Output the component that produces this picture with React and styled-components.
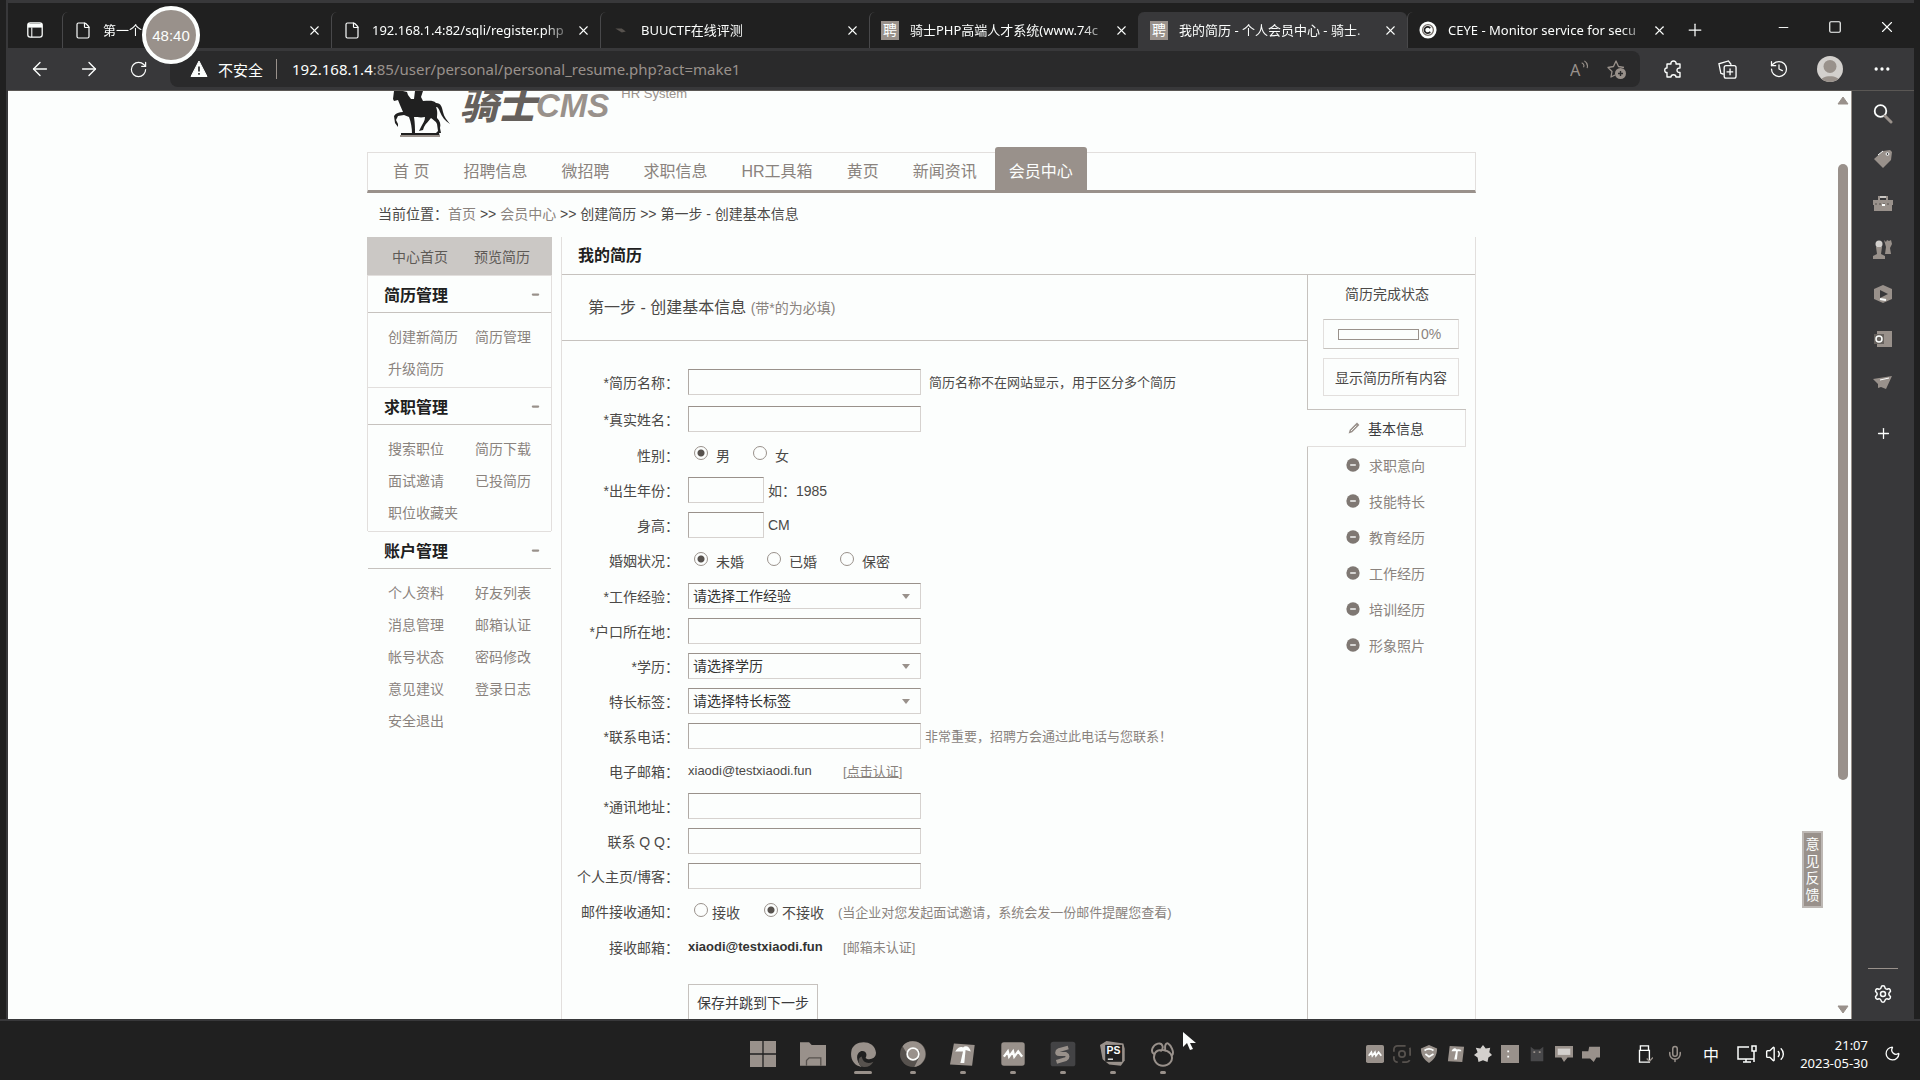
import React from "react";
import styled, { createGlobalStyle, css } from "styled-components";
import {
  ArrowLeft, ArrowRight, RotateCw, X, Plus, Minus, Square, File, History,
  Ellipsis, Settings, Mic, Volume2, Moon,
} from "lucide-react";

const c = {
  ink: "#202020",
  chrome: "#38383a",
  pill: "#2a2a2b",
  tone: "#99918b",
  soft: "#8a837e",
  text: "#4b4947",
  paper: "#fcfefd",
  line: "#c6c2be",
  faint: "#e2dfdd",
};
const uiFont = `"Noto Sans", "Noto Sans CJK SC", sans-serif`;
const pageFont = `"Liberation Sans", "Noto Sans CJK SC", sans-serif`;

const Global = createGlobalStyle`
  * { box-sizing: border-box; }
  body { margin: 0; background: ${c.ink}; overflow: hidden; }
  button, input, select { font: inherit; color: inherit; }
  button { background: none; border: 0; padding: 0; }
  a { color: inherit; text-decoration: none; }
`;

/* ---------- browser window ---------- */
const Desktop = styled.div`
  height: 100vh; display: flex; flex-direction: column;
  background: ${c.ink}; color: ${c.paper}; font-family: ${uiFont}; font-size: 14px;
`;
const Win = styled.div`
  flex: 1; min-height: 0; display: flex; flex-direction: column; position: relative;
  margin: 0 6px; border: solid ${c.chrome}; border-width: 3px 0 0 2px;
`;
const TabStrip = styled.div`
  height: 45px; display: flex; align-items: flex-end; background: ${c.ink};
`;
const TabMenu = styled.button`
  width: 54px; height: 36px; display: flex; align-items: center; padding-left: 19px;
`;
const Tab = styled.div`
  width: 269px; height: 36px; display: flex; align-items: center; gap: 11px;
  padding: 0 9px 0 11px; position: relative;
  border-radius: 6px 6px 0 0;
  border-left: 1px solid ${(p) => (p.$active ? c.chrome : "#48484a")};
  background: ${(p) => (p.$active ? c.chrome : "transparent")};
`;
const TabIcon = styled.span`
  width: 18px; height: 20px; flex: none; display: flex; align-items: center; justify-content: center;
`;
const TabTitle = styled.span`
  flex: 1; min-width: 0; white-space: nowrap; line-height: 24px; font-size: 13px;
  mask-image: linear-gradient(to right, #000 90%, #0005);
`;
const IconButton = styled.button`
  width: ${(p) => p.$w || 16}px; height: ${(p) => p.$h || 24}px; flex: none;
  display: flex; align-items: center; justify-content: center; color: ${(p) => p.$color || c.paper};
`;
const Pin = styled.span`
  width: 18px; height: 19px; background: ${c.tone}; color: ${c.paper}; font-size: 14px; line-height: 18px;
  text-align: center;
`;
const WinButtons = styled.div`
  margin-left: auto; display: flex; height: 41px; align-items: flex-start; padding-top: 8px;
`;
const Toolbar = styled.div`
  height: 43px; display: flex; align-items: center; background: ${c.chrome};
  border-bottom: 1px solid #5a5754; padding-left: 7px;
`;
const Address = styled.div`
  flex: 1; height: 36px; border-radius: 8px; background: ${c.pill}; display: flex; align-items: center;
  margin-left: 7px; padding: 0 12px 0 20px; gap: 10px; font-size: 15px;
`;
const Divider = styled.span`
  width: 1px; height: 20px; background: ${c.tone}; margin: 0 5px 0 3px;
`;
const Url = styled.span`
  flex: 1; color: ${c.tone}; white-space: nowrap;
  b { font-weight: 400; color: ${c.paper}; }
`;
const Tools = styled.div`
  display: flex; align-items: center; padding: 0 7px 0 8px;
`;
const Avatar = styled.span`
  width: 26px; height: 26px; border-radius: 50%; background: #d3d0cd; overflow: hidden; display: block;
`;
const Timer = styled.div`
  position: absolute; left: 134px; top: 3px; width: 58px; height: 58px; border-radius: 50%;
  border: 4px solid ${c.paper}; background: ${c.tone}; display: flex; align-items: center; justify-content: center;
  font-family: ${pageFont}; font-size: 15px;
`;
const Body = styled.div`
  flex: 1; min-height: 0; display: flex; background: ${c.chrome};
`;
const Viewport = styled.div`
  flex: 1; min-width: 0; display: flex; overflow: hidden; position: relative;
  background: ${c.paper}; color: ${c.text}; font-family: ${pageFont};
  border-right: 1px solid ${c.tone};
`;
const ScrollTrack = styled.div`
  width: 16px; flex: none; display: flex; flex-direction: column; align-items: center; padding: 5px 0;
`;
const Thumb = styled.div`
  width: 10px; height: 67.1%; margin-top: 59px; margin-bottom: auto; border-radius: 5px; background: ${c.tone};
`;
const EdgeBar = styled.aside`
  width: 62px; flex: none; display: flex; flex-direction: column; align-items: center; padding-bottom: 13px;
`;
const Rule = styled.span`
  width: 30px; height: 1px; background: ${c.tone}; margin: auto 0 13px;
`;
const Feedback = styled.button`
  position: absolute; right: 28px; top: 740px; width: 21px; height: 77px; padding: 3px 0;
  background: ${c.tone}; border: 2px solid #bdb8b4; color: ${c.paper}; font-size: 14px; line-height: 17px;
  display: flex; flex-direction: column; align-items: center;
`;

/* ---------- site ---------- */
const Site = styled.div`
  width: 1109px; max-width: 100%; min-height: 100%; margin: 0 auto; display: flex; flex-direction: column; font-size: 14px;
`;
const Logo = styled.div`
  height: 61px; flex: none; display: flex; align-items: flex-start; padding-left: 26px; overflow: hidden;
`;
const LogoName = styled.span`
  margin-left: 9px; height: 34px; display: flex; align-items: flex-end; color: #65605c;
  font-style: italic; font-weight: 900; line-height: 38px; font-size: 38px;
`;
const LogoLatin = styled.span`
  height: 31px; display: flex; align-items: flex-end; color: ${c.tone};
  font-style: italic; font-weight: 700; font-size: 33px; line-height: 33px; font-family: ${pageFont};
`;
const LogoTag = styled.span`
  margin-left: 12px; height: 10px; display: flex; align-items: flex-end; color: ${c.tone};
  font-size: 13px; line-height: 14px; white-space: nowrap;
`;
const Nav = styled.nav`
  height: 41px; flex: none; display: flex; padding-left: 8px;
  border: 1px solid ${c.faint}; border-bottom: 3px solid ${c.tone};
`;
const NavLink = styled.a`
  padding: 0 17px; font-size: 16px; line-height: 37px; color: ${c.soft}; white-space: nowrap;
  ${(p) => p.$active && css`
    margin: -6px 0 0 1px; padding: 6px 14px 0; background: ${c.tone}; color: ${c.paper};
    border-radius: 3px 3px 0 0;
  `}
`;
const Crumbs = styled.div`
  height: 44px; flex: none; padding-left: 11px; line-height: 43px; font-size: 14px; white-space: nowrap;
  a { color: ${c.soft}; }
`;
const Columns = styled.div`
  flex: 1; display: flex; gap: 9px;
`;
const Side = styled.div`
  width: 185px; flex: none;
`;
const SideHead = styled.div`
  height: 38px; background: #cbc8c5; display: flex; align-items: center; padding-left: 25px; gap: 26px; color: #5d5955;
`;
const Group = styled.section`
  border: solid ${c.faint}; border-width: 0 1px; padding-bottom: ${(p) => (p.$last ? 0 : 3)}px;
  ${(p) => p.$last && css`border-color: transparent;`}
`;
const GroupHead = styled.h3`
  margin: 0; height: 38px; padding: 0 11px 0 16px; display: flex; align-items: center; justify-content: space-between;
  font-size: 16px; font-weight: 700; color: ${c.ink};
  border-top: 1px solid ${c.faint}; border-bottom: 1px solid ${c.line};
`;
const Links = styled.div`
  display: grid; grid-template-columns: 87px 1fr; grid-auto-rows: 32px; align-items: center;
  padding: 7px 0 0 20px; color: ${c.soft}; white-space: nowrap;
`;
const Main = styled.main`
  flex: 1; min-width: 0; display: flex; flex-direction: column;
  border: solid ${c.faint}; border-width: 0 1px;
`;
const MainTitle = styled.h1`
  margin: 0; height: 38px; padding-left: 16px; line-height: 38px; font-size: 16px; color: ${c.ink};
  border-bottom: 1px solid ${c.line};
`;
const MainBody = styled.div`
  flex: 1; display: flex;
`;
const FormArea = styled.div`
  flex: 1; min-width: 0;
`;
const StepTitle = styled.h2`
  margin: 0; height: 66px; padding-left: 26px; line-height: 65px; font-size: 16px; font-weight: 400;
  border-bottom: 1px solid ${c.line};
  small { font-size: 14px; color: ${c.soft}; }
`;
const Form = styled.form`
  padding-top: 21px; display: flex; flex-direction: column; align-items: flex-start;
`;
const Row = styled.div`
  height: ${(p) => p.$h || 35}px; display: flex; align-items: center; white-space: nowrap;
`;
const Label = styled.label`
  width: 117px; margin-right: 9px; text-align: right;
`;
const boxed = css`
  width: ${(p) => (p.$short ? 76 : 233)}px; height: 26px; background: ${c.paper}; border-radius: 0; outline: 0;
  border: 1px solid; border-color: ${c.tone} #d6d2cf #d6d2cf #b0aaa5;
`;
const Box = styled.input`${boxed}`;
const Pick = styled.select`
  ${boxed}
  appearance: none; padding: 0 4px; color: #333;
`;
const PickWrap = styled.span`
  position: relative; display: flex;
  &::after {
    content: ""; position: absolute; right: 11px; top: 11px; pointer-events: none;
    border: 4px solid transparent; border-top: 5px solid ${c.tone}; border-bottom: 0;
  }
`;
const Hint = styled.span`
  margin-left: ${(p) => p.$gap || 4}px; font-size: ${(p) => (p.$small ? 13 : 14)}px; color: ${(p) => (p.$soft ? c.soft : c.text)};
  a { text-decoration: ${(p) => (p.$under ? "underline" : "none")}; }
`;
const Mail = styled.span`
  width: 154px; font-size: 13px; color: ${(p) => (p.$bold ? "#333" : c.text)}; font-weight: ${(p) => (p.$bold ? 700 : 400)};
`;
const Radios = styled.div`
  display: flex; padding-left: 6px; gap: ${(p) => p.$gap}px;
`;
const Radio = styled.label`
  display: flex; align-items: center; gap: ${(p) => p.$gap}px; padding-top: 1px;
  input {
    appearance: none; width: 14px; height: 14px; margin: 0 0 4px; border: 1px solid ${c.tone}; border-radius: 50%;
    background: ${c.paper};
  }
  input:checked { background: radial-gradient(circle, #57524e 0 3px, ${c.paper} 4px); }
`;
const Save = styled.button`
  margin: 20px 0 0 126px; width: 130px; height: 36px; border: 1px solid ${c.line}; color: #3b3b3d; white-space: nowrap;
`;
const Progress = styled.div`
  width: 168px; flex: none; display: flex; flex-direction: column;
`;
const Status = styled.div`
  width: 159px; height: 135px; display: flex; flex-direction: column; padding-left: 15px;
  border: solid ${c.line}; border-width: 0 0 1px 1px; white-space: nowrap;
`;
const StatusTitle = styled.div`
  height: 44px; line-height: 38px; padding-left: 22px;
`;
const Meter = styled.div`
  width: 136px; height: 30px; border: 1px solid ${c.faint}; border-color: ${c.line} ${c.faint}; padding-left: 14px;
  display: flex; align-items: center; gap: 2px; color: ${c.soft};
`;
const Track = styled.span`
  width: 81px; height: 11px; border: 1px solid ${c.tone};
`;
const ShowAll = styled.button`
  width: 136px; height: 38px; margin-top: 9px; border: 1px solid ${c.faint};
`;
const Step = styled.a`
  height: 36px; display: flex; align-items: center; padding-left: 38px; gap: 9px; color: ${c.soft};
  border-left: 1px solid ${c.line};
  svg { flex: none; }
  ${(p) => p.$active && css`
    width: 159px; height: 37px; color: #3b3b3d; border: solid ${c.faint}; border-width: 0 1px 1px 0; padding-left: 41px; gap: 8px;
  `}
`;
const Rest = styled.div`
  flex: 1; border-left: 1px solid ${c.line};
`;

/* ---------- task bar ---------- */
const Taskbar = styled.footer`
  height: 61px; flex: none; display: flex; align-items: center; border-top: 2px solid ${c.chrome};
  padding: 11px 14px 0 738px; position: relative;
`;
const TaskButton = styled.button`
  width: 50px; height: 48px; display: flex; flex-direction: column; align-items: center; flex: none;
  padding-top: 9px;
  &::after {
    content: ""; width: ${(p) => p.$dot || 0}px; height: 3px; border-radius: 2px; background: ${c.tone}; margin-top: 4px;
  }
`;
const Tray = styled.div`
  margin-left: auto; display: flex; align-items: center; margin-top: -5px;
`;
const TrayItem = styled.button`
  width: ${(p) => p.$w || 27}px; height: 24px; display: flex; align-items: center; justify-content: center; font-size: 16px;
`;
const TrayGroup = styled.div`
  display: flex; margin-right: 24px;
`;
const Clock = styled.div`
  width: 80px; text-align: right; line-height: 18px; font-size: 13px; margin-right: 11px; white-space: nowrap;
`;
const Cursor = styled.svg`
  position: absolute; left: 1182px; top: 10px;
`;

const Horse = () => (
  <svg width="58" height="48" viewBox="0 0 58 48" fill={c.ink}>
    <path d="M1 0h9l4 1 1 3 3 4h3l1-8h8l-2 6 2 4c6 0 10-1 13 2 5 0 6 4 7 9 1 5 4 8 7 12-5-3-8-7-10-12-1-3-2-5-4-5 2 5 1 8 1 11 3 3 4 6 3 10l1 5h-5l2-2-1-7c-1-3-4-4-6-6-2 3-5 5-7 9l-1 3-4 1 2-4c2-4 4-6 4-10-4 1-8 0-11 0 1 6 1 12 1 17h-3c0-6-1-12-3-17l-5-2-6 1-2 4 2 4v3l-3-4-1-7c2-3 5-4 9-4l-3-7-2-5-4 1-1-2z" />
    <path d="M8 42h38l1 4H8z" />
    <path d="M7 44h40v2H7z" fill={c.tone} />
  </svg>
);
const Warning = () => (
  <svg width="18" height="18" viewBox="0 0 18 18">
    <path d="M9 1 17 16.500H1z" fill={c.paper} stroke={c.paper} strokeLinejoin="round" />
    <path d="M9 6.500v5M9 13v1.800" stroke={c.ink} strokeWidth="1.600" />
  </svg>
);
const Tri = ({ down }) => (
  <svg width="12" height="9" viewBox="0 0 12 9" style={{ flex: "none" }}>
    <path d={down ? "M1 1h10L6 8z" : "M1 8h10L6 1z"} fill={c.tone} stroke={c.tone} strokeLinejoin="round" />
  </svg>
);
const S = ({ s = 20, children }) => (
  <svg width={s} height={s} viewBox="0 0 20 20" fill="none" stroke="none">{children}</svg>
);

const edgeIcons = [
  ["搜索", <S><circle cx="7.500" cy="7" r="5.800" stroke={c.paper} strokeWidth="1.800" /><path d="m12 12 6 6" stroke={c.tone} strokeWidth="3" strokeLinecap="round" /></S>],
  ["购物", <S><path d="m1 10 9-8 7-1 2 2-1 8-8 8z" fill={c.tone} /><path d="m5 6 5-4" stroke={c.paper} /><circle cx="14.500" cy="5" r="1.400" fill={c.chrome} stroke={c.paper} /></S>],
  ["工具", <S><path d="M6 6V3h8v3" stroke={c.tone} strokeWidth="2" /><path d="M7 3h6" stroke={c.paper} /><path d="M0 6h20v5H0zM1 10h18v7H1z" fill={c.tone} /><path d="M2 10h16" stroke="#57524e" strokeDasharray="2 2" /><path d="M9 10h3v2H9z" fill={c.paper} /></S>],
  ["游戏", <S><circle cx="6" cy="5" r="3.500" fill="#d3d0cd" /><path d="M3 8h6l-1 7 4 2v3H0v-3l4-2zM11 1l2 2 1-2 2 1 2-1 1 4-2 4 1 6h-6l1-7z" fill={c.tone} /></S>],
  ["办公", <S><path d="M10 1l9 4v10l-9 4-9-4V5z" fill={c.tone} /><path d="m7 6 8 4-8 4z" fill={c.chrome} /><path d="m7 15 6 1" stroke={c.paper} strokeWidth="2" /></S>],
  ["邮件", <S><path d="M4 2h15v16H4z" fill={c.tone} /><path d="M1 5h10v10H1z" fill="#66615d" /><circle cx="6" cy="10" r="3" stroke={c.paper} strokeWidth="1.500" /></S>],
  ["投递", <S><path d="m0 5 19-3-6 13-5-2-3 1v-4z" fill={c.tone} /><path d="m7 6 9-2" stroke={c.paper} /></S>],
];

const taskIcons = [
  [0, <S s={26}><path d="M0 0h9.500v9.500H0zM10.500 0H20v9.500h-9.500zM0 10.500h9.500V20H0zM10.500 10.500H20V20h-9.500z" fill={c.tone} /></S>],
  [0, <S s={26}><path d="M0 1h7l2 2h11v16H0z" fill={c.tone} /><path d="M5 19v-4l2-2h9v6" stroke="#57524e" /></S>],
  [18, <S s={26}><path d="M1 8C2-1 19-2 20 9c0 5-6 6-8 4 2-4-1-6-4-5-4 2-3 8 1 12C3 19 0 14 1 8z" fill={c.tone} /><path d="M9 12c1 5 5 6 9 4-2 4-7 5-10 3-2-2-2-6 1-7z" fill="#57524e" /></S>],
  [6, <S s={26}><circle cx="10" cy="10" r="10" fill="#57524e" /><path d="M2 4c4-6 15-5 17 3 2 6-2 12-8 13l4-8V7H7L5 9z" fill={c.tone} /><circle cx="10" cy="10" r="4.500" fill={c.tone} stroke={c.paper} strokeWidth="1.300" /></S>],
  [6, <S s={26}><path d="m3 2 16 1-2 16-17-1z" fill={c.tone} /><path d="M4 8c2-3 4-4 6-3 2-2 5-1 6 3l-4-1-1 10H8l2-9z" fill={c.paper} /></S>],
  [6, <S s={26}><rect x="1" y="1" width="18" height="18" rx="2" fill={c.tone} /><path d="m3 12 3-4 1 4 3-4 1 4 3-4 3 4" stroke={c.paper} strokeWidth="1.800" /></S>],
  [6, <S s={26}><rect x="0.500" y="0.500" width="19" height="19" rx="2" fill="#434345" /><path d="M14 5 7 7c-2 1-2 3 0 3l5 0c2 1 2 3 0 4l-7 2" stroke={c.tone} strokeWidth="3" /></S>],
  [6, <S s={26}><path d="M0 3 5 0l13 2 1 4v9l-3 4-9-1-5-4z" fill={c.tone} /><path d="M4 3h13v13H4z" fill={c.ink} /><text x="5" y="10" fontSize="8" fontWeight="700" fill={c.paper} fontFamily="Liberation Sans">PS</text><path d="M6 14h4" stroke={c.paper} /></S>],
  [6, <S s={26}><path d="M8 8c3-2 2-7-2-6S0 8 3 10M12 8c-1-4 0-7 2-6s5 7 3 9M4 9c-3 6 2 10 6 10s9-4 6-9c-3-4-10-4-12-1z" stroke={c.tone} strokeWidth="1.500" /></S>],
];

const trayIcons = [
  <S s={18}><rect x="0" y="0" width="20" height="20" rx="2" fill={c.tone} /><path d="m3 12 3-4 1 4 3-4 1 4 3-4 3 4" stroke={c.paper} strokeWidth="1.800" /></S>,
  <S s={18}><rect x="1" y="1" width="18" height="18" rx="4" stroke="#57524e" strokeWidth="2" strokeDasharray="9 5" /><circle cx="10" cy="10" r="3.500" stroke="#57524e" strokeWidth="2" /></S>,
  <S s={18}><path d="M10 0 19 4c0 8-4 13-9 16C5 17 1 12 1 4z" fill={c.tone} /><path d="M5 6c3-2 7-2 10 0M6 10l4 3 5-3" stroke={c.paper} strokeWidth="2" /></S>,
  <S s={18}><path d="m3 1 16 1-2 17-16-1z" fill={c.tone} /><path d="M5 7c2-4 4-4 6-2 3-1 5 0 5 2h-4l-1 9H8l2-9z" fill={c.paper} /></S>,
  <S s={18}><path d="m10 0 3 4 5-1-1 5 3 3-4 3-1 5-5-2-5 2-1-5-4-3 4-3-2-5 5 1z" fill="#d3d0cd" /></S>,
  <S s={18}><rect width="20" height="20" fill={c.tone} /><path d="M7 6h2v2H7zM7 12h2v2H7z" fill={c.paper} /></S>,
  <S s={18}><path d="M3 2l4 3h6l4-3v16H3z" fill="#48484a" /><path d="M6 8h2M12 8h2" stroke={c.tone} strokeWidth="2" /></S>,
  <S s={18}><path d="M0 1h20v13h-6l-4 5-3-5H0z" fill={c.tone} /><path d="M3 4h14v7H3z" fill="#d3d0cd" /></S>,
  <S s={18}><path d="M8 2h12v12h-4l-3 5-4-4H0V7h7z" fill={c.tone} /></S>,
];

const tabs = [
  { t: "第一个", icon: <File size={19} strokeWidth={1.6} /> },
  { t: "192.168.1.4:82/sqli/register.php", icon: <File size={19} strokeWidth={1.6} /> },
  { t: "BUUCTF在线评测", icon: <S s={16}><path d="m3 8 8 0 5 4-5 1z" fill="#57524e" /></S> },
  { t: "骑士PHP高端人才系统(www.74c", icon: <Pin>聘</Pin> },
  { t: "我的简历 - 个人会员中心 - 骑士.", icon: <Pin>聘</Pin>, active: true },
  { t: "CEYE - Monitor service for secu", icon: <S s={18}><circle cx="10" cy="10" r="9.500" fill={c.paper} /><circle cx="10" cy="10" r="6" stroke="#77716c" strokeWidth="1.500" /><path d="M12.500 8a3.500 3.500 0 1 0 0 4" stroke={c.ink} strokeWidth="1.800" /></S> },
];

const groups = [
  ["简历管理", ["创建新简历", "简历管理", "升级简历"]],
  ["求职管理", ["搜索职位", "简历下载", "面试邀请", "已投简历", "职位收藏夹"]],
  ["账户管理", ["个人资料", "好友列表", "消息管理", "邮箱认证", "帐号状态", "密码修改", "意见建议", "登录日志", "安全退出"]],
];

const Text = ({ id, label, h, short, children }) => (
  <Row $h={h}>
    <Label htmlFor={id}>{label}：</Label>
    <Box id={id} type="text" $short={short} />
    {children}
  </Row>
);
const Select = ({ id, label, value }) => (
  <Row>
    <Label htmlFor={id}>{label}：</Label>
    <PickWrap><Pick id={id}><option>{value}</option></Pick></PickWrap>
  </Row>
);
const Options = ({ name, items, on, gap, inner = 8 }) => (
  <Radios $gap={gap}>
    {items.map((x, i) => (
      <Radio key={x} $gap={inner}><input type="radio" name={name} defaultChecked={i === on} />{x}</Radio>
    ))}
  </Radios>
);

export default function App() {
  return (
    <Desktop>
      <Global />
      <Win>
        <TabStrip>
          <TabMenu aria-label="标签页">
            <S s={16}><rect x="1" y="1" width="18" height="18" rx="3" stroke={c.paper} strokeWidth="1.600" /><path d="M1 2h18v5H1z" fill={c.paper} /><path d="M6 7v12" stroke={c.paper} strokeWidth="1.300" /></S>
          </TabMenu>
          {tabs.map((t) => (
            <Tab key={t.t} $active={t.active}>
              <TabIcon>{t.icon}</TabIcon>
              <TabTitle>{t.t}</TabTitle>
              <IconButton aria-label="关闭"><X size={15} strokeWidth={1.7} /></IconButton>
            </Tab>
          ))}
          <IconButton $w={38} $h={36} aria-label="新标签"><Plus size={20} strokeWidth={1.5} /></IconButton>
          <WinButtons>
            <IconButton $w={51} aria-label="最小化"><Minus size={15} strokeWidth={1.5} /></IconButton>
            <IconButton $w={51} aria-label="最大化"><Square size={14} strokeWidth={2} /></IconButton>
            <IconButton $w={54} aria-label="关闭窗口"><X size={18} strokeWidth={1.5} /></IconButton>
          </WinButtons>
        </TabStrip>
        <Toolbar>
          <IconButton $w={49} aria-label="后退"><ArrowLeft size={22} strokeWidth={1.5} /></IconButton>
          <IconButton $w={49} aria-label="前进"><ArrowRight size={22} strokeWidth={1.5} /></IconButton>
          <IconButton $w={50} aria-label="刷新"><RotateCw size={19} strokeWidth={1.5} /></IconButton>
          <Address>
            <Warning />
            <span>不安全</span>
            <Divider />
            <Url><b>192.168.1.4</b>:85/user/personal/personal_resume.php?act=make1</Url>
            <IconButton $w={30} $color={c.tone} aria-label="朗读">
              <S s={18}><text x="0" y="18" fontSize="18" fill={c.tone} fontFamily="Noto Sans">A</text><path d="M13 3c2 1 3 3 2 5M16 1c3 2 4 5 3 8" stroke={c.tone} strokeWidth="1.200" /></S>
            </IconButton>
            <IconButton $w={24} $color={c.tone} aria-label="收藏">
              <S s={20}><path d="M18 8.500 12.500 7.500 10 2 7.500 7.500 2 8.500l4 4L5 18l4-2" stroke={c.tone} strokeWidth="1.300" strokeLinejoin="round" /><circle cx="14.500" cy="14.500" r="5.500" fill={c.tone} /><path d="M14.500 12v5M12 14.500h5" stroke={c.pill} strokeWidth="1.400" /></S>
            </IconButton>
          </Address>
          <Tools>
            <IconButton $w={52} aria-label="扩展">
              <S s={20}><path d="M3 5h4c-1-4 6-4 5 0h4v4c-4-.5-4 5 0 4.500V18h-4c0-3-5-3-5 0H3v-4.500c-3 .5-3-5 0-4.500z" stroke={c.paper} strokeWidth="1.400" strokeLinejoin="round" /></S>
            </IconButton>
            <IconButton $w={54} aria-label="集锦">
              <S s={19}><path d="M6 15 3 14 1 4l10-3 3 4" stroke={c.paper} strokeWidth="1.400" /><rect x="6.500" y="6" width="12.500" height="13" rx="2" stroke={c.paper} strokeWidth="1.400" /><path d="M12.700 9v7M9 12.500h7" stroke={c.paper} strokeWidth="1.400" /></S>
            </IconButton>
            <IconButton $w={50} aria-label="历史"><History size={20} strokeWidth={1.5} /></IconButton>
            <IconButton $w={52} $h={28} aria-label="用户">
              <Avatar><S s={26}><circle cx="10" cy="8" r="5" fill={c.tone} /><path d="M2 20c1-6 15-6 16 0z" fill={c.tone} /></S></Avatar>
            </IconButton>
            <IconButton $w={51} aria-label="更多"><Ellipsis size={20} strokeWidth={2} /></IconButton>
          </Tools>
        </Toolbar>
        <Body>
          <Viewport>
            <Site>
              <Logo>
                <Horse />
                <LogoName>骑士</LogoName>
                <LogoLatin>CMS</LogoLatin>
                <LogoTag>HR System</LogoTag>
              </Logo>
              <Nav>
                {["首 页", "招聘信息", "微招聘", "求职信息", "HR工具箱", "黄页", "新闻资讯"].map((n) => <NavLink key={n} href="#">{n}</NavLink>)}
                <NavLink href="#" $active>会员中心</NavLink>
              </Nav>
              <Crumbs>当前位置：<a href="#">首页</a> &gt;&gt; <a href="#">会员中心</a> &gt;&gt; 创建简历 &gt;&gt; 第一步 - 创建基本信息</Crumbs>
              <Columns>
                <Side>
                  <SideHead><a href="#">中心首页</a><a href="#">预览简历</a></SideHead>
                  {groups.map(([title, links], i) => (
                    <Group key={title} $last={i === 2}>
                      <GroupHead>{title}<Minus size={9} color={c.tone} strokeWidth={6} /></GroupHead>
                      <Links>{links.map((l) => <a key={l} href="#">{l}</a>)}</Links>
                    </Group>
                  ))}
                </Side>
                <Main>
                  <MainTitle>我的简历</MainTitle>
                  <MainBody>
                    <FormArea>
                      <StepTitle>第一步 - 创建基本信息 <small>(带*的为必填)</small></StepTitle>
                      <Form onSubmit={(e) => e.preventDefault()}>
                        <Text id="title" label="*简历名称" h={39}><Hint $gap={8} $small>简历名称不在网站显示，用于区分多个简历</Hint></Text>
                        <Text id="name" label="*真实姓名" h={36} />
                        <Row><Label as="span">性别：</Label><Options name="sex" items={["男", "女"]} on={0} gap={23} /></Row>
                        <Text id="birth" label="*出生年份" short><Hint>如：1985</Hint></Text>
                        <Text id="height" label="身高" short><Hint>CM</Hint></Text>
                        <Row $h={36}><Label as="span">婚姻状况：</Label><Options name="marry" items={["未婚", "已婚", "保密"]} on={0} gap={23} /></Row>
                        <Select id="exp" label="*工作经验" value="请选择工作经验" />
                        <Text id="home" label="*户口所在地" />
                        <Select id="edu" label="*学历" value="请选择学历" />
                        <Select id="tag" label="特长标签" value="请选择特长标签" />
                        <Text id="tel" label="*联系电话"><Hint $soft $small>非常重要，招聘方会通过此电话与您联系！</Hint></Text>
                        <Row><Label as="span">电子邮箱：</Label><Mail>xiaodi@testxiaodi.fun</Mail><Hint $gap={1} $small $soft $under>[<a href="#">点击认证</a>]</Hint></Row>
                        <Text id="addr" label="*通讯地址" />
                        <Text id="qq" label="联系 Q Q" />
                        <Text id="site" label="个人主页/博客" />
                        <Row $h={36}><Label as="span">邮件接收通知：</Label><Options name="notice" items={["接收", "不接收"]} on={1} gap={24} inner={4} /><Hint $gap={14} $soft $small>(当企业对您发起面试邀请，系统会发一份邮件提醒您查看)</Hint></Row>
                        <Row><Label as="span">接收邮箱：</Label><Mail $bold>xiaodi@testxiaodi.fun</Mail><Hint $gap={1} $small $soft>[<a href="#">邮箱未认证</a>]</Hint></Row>
                        <Save type="submit">保存并跳到下一步</Save>
                      </Form>
                    </FormArea>
                    <Progress>
                      <Status>
                        <StatusTitle>简历完成状态</StatusTitle>
                        <Meter><Track />0%</Meter>
                        <ShowAll>显示简历所有内容</ShowAll>
                      </Status>
                      <Step href="#" $active>
                        <S s={12}><path d="m1 19 2-6L15 1l4 4L7 17z" fill={c.tone} /><path d="m5 15 9-9" stroke={c.paper} strokeWidth="1.500" /></S>
                        基本信息
                      </Step>
                      {["求职意向", "技能特长", "教育经历", "工作经历", "培训经历", "形象照片"].map((s) => (
                        <Step key={s} href="#">
                          <S s={14}><circle cx="10" cy="10" r="9.500" fill="#7f7873" /><path d="M6 10h8" stroke={c.paper} strokeWidth="2" /></S>
                          {s}
                        </Step>
                      ))}
                      <Rest />
                    </Progress>
                  </MainBody>
                </Main>
              </Columns>
            </Site>
            <ScrollTrack><Tri /><Thumb /><Tri down /></ScrollTrack>
            <Feedback>{[..."意见反馈"].map((x) => <span key={x}>{x}</span>)}</Feedback>
          </Viewport>
          <EdgeBar>
            {edgeIcons.map(([n, icon]) => <IconButton key={n} $w={40} $h={45} aria-label={n}>{icon}</IconButton>)}
            <IconButton $w={40} $h={54} aria-label="添加"><Plus size={17} strokeWidth={1.8} /></IconButton>
            <Rule />
            <IconButton $w={40} aria-label="设置"><Settings size={20} strokeWidth={1.8} /></IconButton>
          </EdgeBar>
        </Body>
        <Timer>48:40</Timer>
      </Win>
      <Taskbar>
        {taskIcons.map(([dot, icon], i) => <TaskButton key={i} $dot={dot} aria-label={`应用 ${i + 1}`}>{icon}</TaskButton>)}
        <Tray>
          <TrayGroup>
            {trayIcons.map((icon, i) => <TrayItem key={i} aria-label={`托盘 ${i + 1}`}>{icon}</TrayItem>)}
          </TrayGroup>
          <TrayItem $w={32} aria-label="移动设备"><S s={18}><path d="M6 6V1h9v5M5 6h11v13H5z" stroke={c.paper} strokeWidth="1.500" /><path d="m13 15 3 3 4-4" stroke={c.tone} strokeWidth="1.500" /></S></TrayItem>
          <TrayItem $w={30} aria-label="麦克风"><Mic size={18} color={c.tone} /></TrayItem>
          <TrayItem $w={42}>中</TrayItem>
          <TrayItem $w={30} aria-label="网络"><S s={20}><path d="M12 3H1v12h16v-4M6 18h8M9 15v3M15 2h4v5h-4zM17 7v11" stroke={c.paper} strokeWidth="1.500" /></S></TrayItem>
          <TrayItem $w={26} aria-label="音量"><Volume2 size={20} strokeWidth={1.7} /></TrayItem>
          <Clock>21:07<br />2023-05-30</Clock>
          <TrayItem aria-label="勿扰"><Moon size={17} strokeWidth={1.8} /></TrayItem>
        </Tray>
        <Cursor width="15" height="20" viewBox="0 0 15 20"><path d="M1 1v15l4-4 3 7 3-1-3-6h6z" fill={c.paper} /></Cursor>
      </Taskbar>
    </Desktop>
  );
}
